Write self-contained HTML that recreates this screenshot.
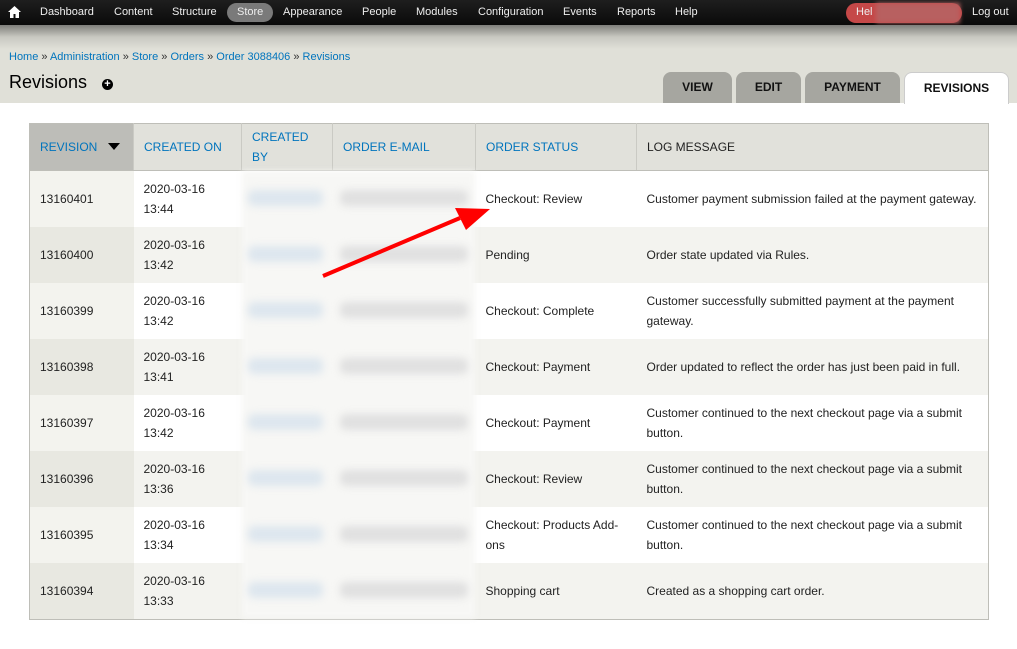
<!DOCTYPE html><html><head><style>
body{margin:0;width:1017px;height:649px;background:#fff;font-family:"Liberation Sans",sans-serif;font-size:12px;position:relative;overflow:hidden}
.bar{position:absolute;left:0;top:0;width:1017px;height:25px;background:linear-gradient(#1e1e1e,#0a0a0a)}
.bar span{position:absolute;top:6px;color:#eee;font-size:11px}
.hdr{position:absolute;left:0;top:25px;width:1017px;height:78px;background:linear-gradient(#7e7e7a 0,#c8c8c1 12px,#e0e0d8 24px,#e0e0d8)}
a{color:#0074bd;text-decoration:none}
.tab{position:absolute;top:72px;height:31px;background:#a6a6a0;border-radius:8px 8px 0 0;font-weight:bold;font-size:12px;text-align:center;line-height:31px;color:#111}
table{position:absolute;left:29px;top:123px;border-collapse:collapse;border:1px solid #bebeb8;table-layout:fixed;width:960px}
td,th{padding:0 10px;height:56px;line-height:20px;vertical-align:middle;text-align:left;font-weight:normal;color:#222}
th{height:46px;background:#e1e1db;border-left:1px solid #cacac4;border-bottom:1px solid #bebeb8}
th a{color:#0074bd}
tr:nth-child(odd) td{background:#f3f3ef}
tr td{background:#fff}
td.r{background:#f3f3ee!important}
tr:nth-child(odd) td.r{background:#e8e8e1!important}
.blur{position:absolute;filter:blur(4px);border-radius:6px}
</style></head><body>
<div class="bar">
<svg style="position:absolute;left:8px;top:6px" width="13" height="12" viewBox="0 0 13 12"><path d="M6.5 0L0 6h2v6h3.5V8h2v4H11V6h2z" fill="#fff"/></svg>
<span style="left:40px">Dashboard</span><span style="left:114px">Content</span><span style="left:172px">Structure</span>
<div style="position:absolute;left:227px;top:3px;width:46px;height:19px;border-radius:10px;background:#7a7a7a"></div>
<span style="left:237px">Store</span><span style="left:283px">Appearance</span><span style="left:362px">People</span><span style="left:416px">Modules</span><span style="left:478px">Configuration</span><span style="left:563px">Events</span><span style="left:617px">Reports</span><span style="left:675px">Help</span>
<div style="position:absolute;left:846px;top:3px;width:116px;height:20px;border-radius:10px;background:#c54848"></div>
<div style="position:absolute;left:876px;top:3px;width:84px;height:20px;background:#b86060;filter:blur(2px)"></div>
<span style="left:856px">Hel</span><span style="left:972px">Log out</span>
</div>
<div class="hdr"></div>
<div style="position:absolute;left:9px;top:51px;font-size:11px;color:#333"><a>Home</a> » <a>Administration</a> » <a>Store</a> » <a>Orders</a> » <a>Order 3088406</a> » <a>Revisions</a></div>
<div style="position:absolute;left:9px;top:72px;font-size:18px;color:#000">Revisions</div>
<div style="position:absolute;left:102px;top:79px;width:11px;height:11px;border-radius:50%;background:#000;color:#fff;font-size:11px;line-height:11px;text-align:center;font-weight:bold">+</div>
<div class="tab" style="left:663px;width:69px">VIEW</div>
<div class="tab" style="left:736px;width:65px">EDIT</div>
<div class="tab" style="left:805px;width:95px">PAYMENT</div>
<div class="tab" style="left:904px;width:103px;background:#fff;border:1px solid #ccc;border-bottom:none">REVISIONS</div>
<table>
<colgroup><col style="width:104px"><col style="width:108px"><col style="width:91px"><col style="width:143px"><col style="width:161px"><col></colgroup>
<tr><th style="background:#bdbdb8;border-left:none;white-space:nowrap"><a>REVISION</a></th><th><a>CREATED ON</a></th><th><a>CREATED BY</a></th><th><a>ORDER E-MAIL</a></th><th><a>ORDER STATUS</a></th><th>LOG MESSAGE</th></tr>
<tr><td class="r">13160401</td><td>2020-03-16<br>13:44</td><td></td><td></td><td>Checkout: Review</td><td>Customer payment submission failed at the payment gateway.</td></tr>
<tr><td class="r">13160400</td><td>2020-03-16<br>13:42</td><td></td><td></td><td>Pending</td><td>Order state updated via Rules.</td></tr>
<tr><td class="r">13160399</td><td>2020-03-16<br>13:42</td><td></td><td></td><td>Checkout: Complete</td><td>Customer successfully submitted payment at the payment gateway.</td></tr>
<tr><td class="r">13160398</td><td>2020-03-16<br>13:41</td><td></td><td></td><td>Checkout: Payment</td><td>Order updated to reflect the order has just been paid in full.</td></tr>
<tr><td class="r">13160397</td><td>2020-03-16<br>13:42</td><td></td><td></td><td>Checkout: Payment</td><td>Customer continued to the next checkout page via a submit button.</td></tr>
<tr><td class="r">13160396</td><td>2020-03-16<br>13:36</td><td></td><td></td><td>Checkout: Review</td><td>Customer continued to the next checkout page via a submit button.</td></tr>
<tr><td class="r">13160395</td><td>2020-03-16<br>13:34</td><td></td><td></td><td>Checkout: Products Add-ons</td><td>Customer continued to the next checkout page via a submit button.</td></tr>
<tr><td class="r">13160394</td><td>2020-03-16<br>13:33</td><td></td><td></td><td>Shopping cart</td><td>Created as a shopping cart order.</td></tr>
</table>
<svg style="position:absolute;left:108px;top:143px" width="12" height="7"><polygon points="0,0 12,0 6,7" fill="#000"/></svg>
<div style="position:absolute;left:242px;top:171px;width:233px;height:447px;background:#f7f7f5;filter:blur(3px)"></div>
<div class="blur" style="left:248px;top:190px;width:75px;height:16px;background:#dde6ee"></div>
<div class="blur" style="left:340px;top:190px;width:128px;height:16px;background:#e0e0e0"></div>
<div class="blur" style="left:248px;top:246px;width:75px;height:16px;background:#dde6ee"></div>
<div class="blur" style="left:340px;top:246px;width:128px;height:16px;background:#e0e0e0"></div>
<div class="blur" style="left:248px;top:302px;width:75px;height:16px;background:#dde6ee"></div>
<div class="blur" style="left:340px;top:302px;width:128px;height:16px;background:#e0e0e0"></div>
<div class="blur" style="left:248px;top:358px;width:75px;height:16px;background:#dde6ee"></div>
<div class="blur" style="left:340px;top:358px;width:128px;height:16px;background:#e0e0e0"></div>
<div class="blur" style="left:248px;top:414px;width:75px;height:16px;background:#dde6ee"></div>
<div class="blur" style="left:340px;top:414px;width:128px;height:16px;background:#e0e0e0"></div>
<div class="blur" style="left:248px;top:470px;width:75px;height:16px;background:#dde6ee"></div>
<div class="blur" style="left:340px;top:470px;width:128px;height:16px;background:#e0e0e0"></div>
<div class="blur" style="left:248px;top:526px;width:75px;height:16px;background:#dde6ee"></div>
<div class="blur" style="left:340px;top:526px;width:128px;height:16px;background:#e0e0e0"></div>
<div class="blur" style="left:248px;top:582px;width:75px;height:16px;background:#dde6ee"></div>
<div class="blur" style="left:340px;top:582px;width:128px;height:16px;background:#e0e0e0"></div>
<svg style="position:absolute;left:0;top:0" width="1017" height="649"><line x1="323" y1="276" x2="460" y2="218" stroke="#f00" stroke-width="4"/><polygon points="490,209 455,208 466,230" fill="#f00"/></svg>
</body></html>
